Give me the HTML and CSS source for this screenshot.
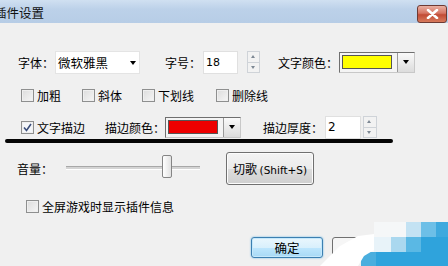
FILE: index.html
```html
<!DOCTYPE html>
<html lang="zh-CN">

<head>
    <meta charset="UTF-8">
    <title>插件设置</title>
    <link rel="stylesheet" href="styles.css">
</head>

<body>
    <div class="window">
        <div class="titlebar">
            <span class="title">插件设置</span>
            <span class="close">
                <svg width="13" height="10" viewBox="0 0 13 10">
                    <path d="M2 1 L11 9 M11 1 L2 9" stroke="#fff" stroke-width="2.6" stroke-linecap="round" />
                </svg>
            </span>
        </div>

        <div class="row row-font">
            <span class="label w-font">字体：</span>
            <div class="combo">
                <span class="combo-text">微软雅黑</span>
                <span class="arrow"></span>
            </div>
            <span class="label w-size">字号：</span>
            <div class="spin-input">18</div>
            <div class="spinner"><span class="up"></span><span class="down"></span></div>
            <span class="label w-color">文字颜色：</span>
            <div class="color-combo">
                <span class="swatch yellow"></span>
                <span class="drop"><span class="arrow"></span></span>
            </div>
        </div>

        <div class="row row-style">
            <label class="check w-bold"><span class="box"></span>加粗</label>
            <label class="check w-italic"><span class="box"></span>斜体</label>
            <label class="check w-under"><span class="box"></span>下划线</label>
            <label class="check"><span class="box"></span>删除线</label>
        </div>

        <div class="row row-stroke">
            <label class="check w-stroke">
                <span class="box checked">
                    <svg width="9" height="9" viewBox="0 0 9 9">
                        <path d="M1 4.5 L3.5 7.5 L8 1" fill="none" stroke="#3b4e7a" stroke-width="1.6" />
                    </svg>
                </span>文字描边
            </label>
            <span class="label w-scolor">描边颜色：</span>
            <div class="color-combo small">
                <span class="swatch red"></span>
                <span class="drop"><span class="arrow"></span></span>
            </div>
            <span class="label w-thick">描边厚度：</span>
            <div class="spin-input thick">2</div>
            <div class="spinner thick"><span class="up"></span><span class="down"></span></div>
        </div>
        <div class="ink-line"></div>

        <div class="row row-volume">
            <span class="label w-volume">音量：</span>
            <div class="slider">
                <span class="thumb"></span>
            </div>
            <button class="btn next">切歌 <span class="latin">(Shift+S)</span></button>
        </div>

        <div class="row row-full">
            <label class="check"><span class="box"></span>全屏游戏时显示插件信息</label>
        </div>

        <div class="row row-buttons">
            <button class="btn ok">确定</button>
            <button class="btn cancel"></button>
        </div>

        <svg class="watermark" width="128" height="44" viewBox="0 0 128 44">
            <rect x="54" y="0" width="32" height="15" fill="#f5f7f8" />
            <rect x="86" y="0" width="15" height="15" fill="#c3e2f3" />
            <rect x="101" y="0" width="15" height="15" fill="#6dbfe7" />
            <rect x="116" y="0" width="12" height="15" fill="#3ea9de" />
            <rect x="42" y="15" width="12" height="15" fill="#f7f9fa" />
            <rect x="54" y="15" width="17" height="15" fill="#e8f3f9" />
            <rect x="71" y="15" width="15" height="15" fill="#aad8ef" />
            <rect x="86" y="15" width="15" height="15" fill="#5ab8e4" />
            <rect x="101" y="15" width="27" height="15" fill="#2fa3dc" />
            <rect x="41" y="30" width="15" height="14" fill="#4aaede" />
            <rect x="56" y="30" width="72" height="14" fill="#2fa3dc" />
            <path d="M0 44 L20 24 L38 14 L54 12 L54 28 L44 34 L38 44 Z" fill="#ffffff" />
        </svg>
    </div>
</body>

</html>
```

FILE: styles.css
```css
body {
    margin: 0;
    font-family: "Noto Sans CJK SC", "Liberation Sans", sans-serif;
    font-size: 12px;
    color: #000;
}

.window {
    position: relative;
    width: 448px;
    height: 266px;
    overflow: hidden;
    background-color: #f0f0f0;
}

.titlebar {
    height: 23px;
    display: flex;
    align-items: center;
    justify-content: space-between;
    background: linear-gradient(#d0e0f1, #bcd1e9 40%, #b7cde6);
}

.title {
    margin-left: -6px;
    margin-top: 2px;
    font-size: 12.5px;
    color: #111;
}

.close {
    width: 28px;
    height: 16px;
    margin-top: 4px;
    margin-right: 1px;
    display: flex;
    align-items: center;
    justify-content: center;
    border: 1px solid #6e3a33;
    border-radius: 3px;
    background: linear-gradient(#eab0a2, #d67563 45%, #c24b35 55%, #d77a5c);
}

.row {
    display: flex;
    align-items: center;
}

.label {
    flex: none;
    white-space: nowrap;
}

/* row 1 */
.row-font {
    height: 22px;
    margin-top: 28px;
}

.w-font {
    margin-left: 18px;
    width: 37px;
}

.combo {
    width: 83px;
    height: 21px;
    display: flex;
    align-items: center;
    justify-content: space-between;
    background-color: #fff;
    border: 1px solid #e4e4e4;
}

.combo-text {
    margin-left: 2px;
    font-size: 12.5px;
}

.arrow {
    width: 0;
    height: 0;
    border-left: 3.5px solid transparent;
    border-right: 3.5px solid transparent;
    border-top: 4px solid #000;
}

.combo .arrow {
    margin-right: 3px;
    margin-top: 2px;
}

.w-size {
    margin-left: 25px;
    width: 38px;
}

.spin-input {
    width: 31px;
    height: 21px;
    padding-left: 2px;
    line-height: 21px;
    font-family: "DejaVu Sans", sans-serif;
    font-size: 11px;
    background-color: #fff;
    border: 1px solid #e0e0e0;
}

.spinner {
    width: 11px;
    height: 20px;
    margin-left: 9px;
    display: flex;
    flex-direction: column;
    border: 1px solid #cfd3d8;
    background-color: #f2f2f2;
}

.spinner span {
    flex: 1;
    position: relative;
}

.spinner .up {
    border-bottom: 1px solid #cfd3d8;
}

.spinner .up::after,
.spinner .down::after {
    content: "";
    position: absolute;
    left: 3px;
    top: 3px;
    border-left: 2.5px solid transparent;
    border-right: 2.5px solid transparent;
}

.spinner .up::after {
    border-bottom: 3px solid #7d8894;
}

.spinner .down::after {
    border-top: 3px solid #7d8894;
}

.w-color {
    margin-left: 18px;
    width: 61px;
}

.color-combo {
    width: 72px;
    height: 19px;
    display: flex;
    align-items: center;
    padding-left: 2px;
    border: 1px solid #6f6f6f;
    border-right-color: #c8c8c8;
    border-bottom-color: #c8c8c8;
    background-color: #f4f4f4;
}

.swatch {
    width: 48px;
    height: 12px;
    border: 1px solid #555;
}

.yellow {
    background-color: #ffff00;
}

.red {
    background-color: #ee0000;
}

.drop {
    width: 16px;
    height: 19px;
    margin-left: auto;
    display: flex;
    align-items: center;
    justify-content: center;
    border-left: 1px solid #9a9a9a;
    background: linear-gradient(#fafafa, #dcdcdc);
}

/* row 2 */
.row-style {
    height: 14px;
    margin-top: 15px;
}

.check {
    display: flex;
    align-items: center;
    white-space: nowrap;
}

.box {
    width: 11px;
    height: 11px;
    margin-right: 3px;
    display: flex;
    align-items: center;
    justify-content: center;
    border: 1px solid #8e8f8f;
    background: linear-gradient(135deg, #dcdcdc, #f6f6f6);
    box-shadow: inset 0 0 0 1px #efefef;
}

.box.checked {
    background: #f4f6f9;
}

.row-style .check:first-child {
    margin-left: 21px;
}

.w-bold {
    width: 61px;
}

.w-italic {
    width: 60px;
}

.w-under {
    width: 74px;
}

/* row 3 */
.row-stroke {
    height: 22px;
    margin-top: 14px;
}

.w-stroke {
    margin-left: 21px;
    width: 84px;
}

.w-scolor {
    width: 60px;
}

.color-combo.small {
    width: 72px;
}

.w-thick {
    margin-left: 22px;
    width: 62px;
}

.spin-input.thick {
    width: 32px;
    font-size: 12px;
}

.spinner.thick {
    margin-left: 2px;
    width: 12px;
}

.ink-line {
    width: 388px;
    height: 4px;
    margin: 1px 0 0 5px;
    border-radius: 2px;
    background-color: #050505;
}

/* row 4 */
.row-volume {
    height: 33px;
    margin-top: 9px;
}

.w-volume {
    margin-left: 17px;
    width: 49px;
}

.slider {
    position: relative;
    width: 134px;
    height: 2px;
    margin-top: -2px;
    border-top: 1px solid #a8a8a8;
    border-bottom: 1px solid #ffffff;
    background-color: #d4d4d4;
}

.thumb {
    position: absolute;
    left: 96px;
    top: -12px;
    width: 8px;
    height: 21px;
    border: 1px solid #858585;
    border-radius: 2px;
    background: linear-gradient(90deg, #ffffff, #e2e2e2);
}

.btn {
    padding: 0;
    font-family: "Noto Sans CJK SC", "Liberation Sans", sans-serif;
    font-size: 12px;
    color: #000;
}

.next {
    width: 88px;
    height: 33px;
    margin-left: 26px;
    border: 1px solid #707070;
    border-radius: 3px;
    background: linear-gradient(#f3f3f3, #ebebeb 50%, #dddddd 51%, #cfcfcf);
    box-shadow: inset 0 0 0 1px #fcfcfc;
}

.latin {
    font-family: "DejaVu Sans", sans-serif;
    font-size: 10.5px;
}

/* row 5 */
.row-full {
    height: 14px;
    margin-top: 14px;
}

.row-full .check {
    margin-left: 26px;
}

/* buttons */
.row-buttons {
    height: 21px;
    margin-top: 24px;
}

.ok {
    width: 72px;
    height: 21px;
    margin-left: 251px;
    font-size: 12.5px;
    border: 1px solid #3c7fb1;
    border-radius: 3px;
    background: linear-gradient(#eaf6fd, #d9f0fc 50%, #bee6fd 51%, #a7d9f5);
    box-shadow: inset 0 0 0 1px #c5e8fb, 0 0 2px #5eb4e4;
}

.cancel {
    width: 72px;
    height: 21px;
    margin-left: 9px;
    border: 1px solid #707070;
    border-radius: 3px;
    background-color: #f6f6f6;
}

.watermark {
    position: absolute;
    left: 320px;
    top: 222px;
}
```
